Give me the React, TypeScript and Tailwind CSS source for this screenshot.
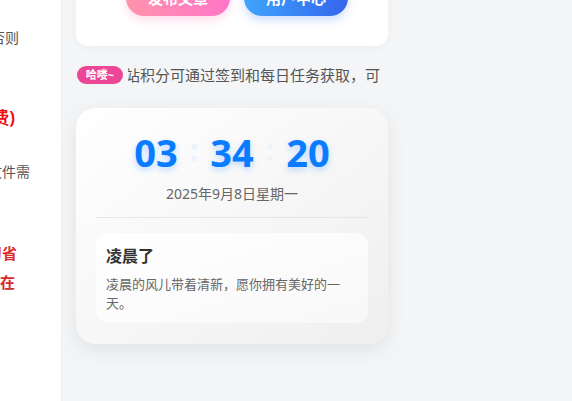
import React from 'react';

const font = { fontFamily: '"Noto Sans", "Noto Sans CJK SC", sans-serif' };

const SideLine = ({ text, className }: { text: string; className: string }) => (
  <div className={`whitespace-nowrap ${className}`}>{text}</div>
);

const App = () => {
  return (
    <div className="w-[572px] h-[401px] flex bg-[#f4f5f7] overflow-hidden" style={font}>
      {/* left sidebar, cut off */}
      <div className="w-[62px] shrink-0 bg-white border-r border-[#eef0f3] overflow-hidden relative">
        <div className="absolute right-[43px] top-0 flex flex-col items-end">
          <SideLine text="请遵守社区规则，否则" className="mt-[27px] -mr-[1px] text-[14px] text-[#555]" />
          <SideLine text="（积分兑换免费)" className="mt-[57px] mr-[3px] text-[17px] font-bold text-[#f01010]" />
          <SideLine text="请注意：部分文件需" className="mt-[30px] -mr-[12px] text-[14px] text-[#555]" />
          <SideLine text="本站资源仅供学习省" className="mt-[60px] mr-[1px] text-[15px] font-bold text-[#d92a2a]" />
          <SideLine text="请于下载后24小时内在" className="mt-[7px] mr-[3px] text-[15px] font-bold text-[#d92a2a]" />
        </div>
      </div>

      {/* main column */}
      <div className="w-[312px] ml-[14px] flex flex-col">
        <div className="h-[66px] -mt-[20px] bg-white rounded-[12px] shadow-[0_2px_10px_rgba(0,0,0,0.03)] flex justify-center gap-[14px] pl-[10px]">
          <button className="w-[104px] h-[36px] rounded-full bg-gradient-to-r from-[#ff93ab] to-[#ff75c8] text-white font-bold text-[15px] shadow-[0_4px_10px_rgba(255,120,180,0.25)]">
            发布文章
          </button>
          <button className="w-[104px] h-[36px] rounded-full bg-gradient-to-r from-[#40a4fb] to-[#3564ed] text-white font-bold text-[15px] shadow-[0_4px_10px_rgba(60,120,240,0.25)]">
            用户中心
          </button>
        </div>

        <div className="mt-[20px] h-[18px] flex items-center">
          <span className="shrink-0 ml-[1px] h-[18px] w-[46px] text-center rounded-full bg-[#ec4696] text-white text-[11px] font-bold leading-[18px]">
            哈喽~
          </span>
          <div className="ml-[5px] w-[252px] overflow-hidden whitespace-nowrap text-[15px] text-[#555] leading-[18px]">
            <span className="inline-block -ml-[3px]">站积分可通过签到和每日任务获取，可用于兑换资源</span>
          </div>
        </div>

        <div className="mt-[24px] h-[236px] rounded-[20px] bg-gradient-to-br from-[#ffffff] to-[#efefef] shadow-[0_6px_20px_rgba(0,0,0,0.08)] px-[20px] pt-[22px] flex flex-col">
          <div className="flex justify-center items-center gap-[12px] text-[38px] font-bold leading-[44px] text-[#0a7cff] [text-shadow:0_3px_6px_rgba(10,124,255,0.25)]">
            <span>03</span>
            <span className="text-[#eaf2fb] [text-shadow:none] text-[30px] -mt-[4px]">:</span>
            <span>34</span>
            <span className="text-[#eaf2fb] [text-shadow:none] text-[30px] -mt-[4px]">:</span>
            <span>20</span>
          </div>
          <div className="mt-[9px] text-center text-[14px] text-[#666]">2025年9月8日星期一</div>
          <div className="mt-[13px] border-t border-[#e6e6e6]" />
          <div className="mt-[15px] h-[90px] rounded-[12px] bg-gradient-to-br from-[#ffffff] to-[#f8f8f8] px-[10px] pt-[11px]">
            <div className="text-[16px] font-bold text-[#333] leading-[24px]">凌晨了</div>
            <div className="mt-[7px] pr-[14px] text-[13px] text-[#666] leading-[19px]">
              凌晨的风儿带着清新，愿你拥有美好的一天。
            </div>
          </div>
        </div>
      </div>
    </div>
  );
};

export default App;
